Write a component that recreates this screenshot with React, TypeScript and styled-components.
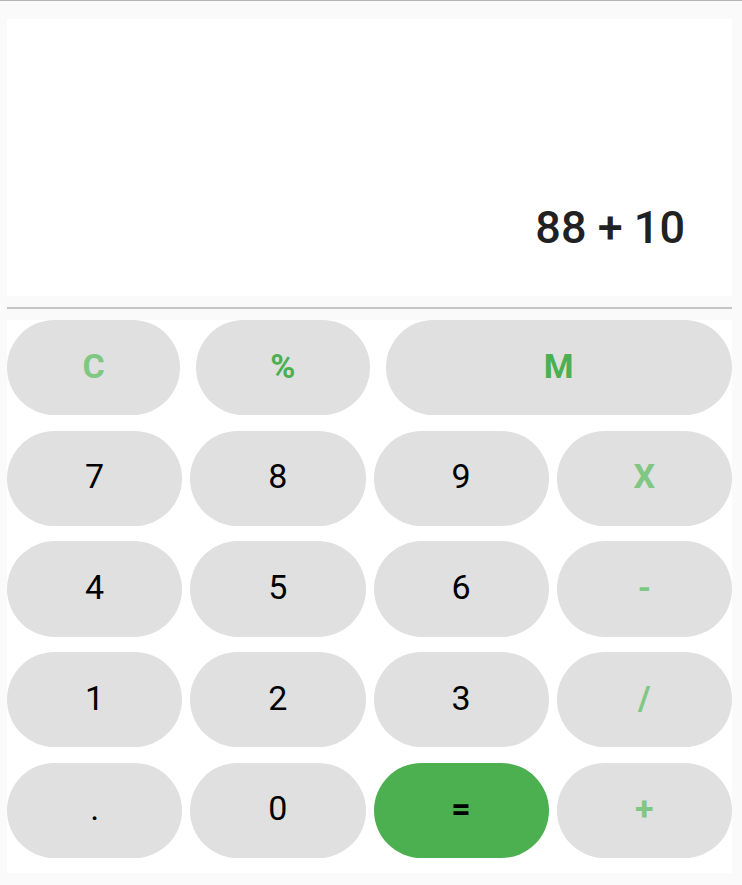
import React from "react";
import styled, { createGlobalStyle } from "styled-components";

const GlobalStyle = createGlobalStyle`
  html, body {
    margin: 0;
    padding: 0;
    background: #fafafa;
    font-family: Roboto, "Liberation Sans", sans-serif;
  }
  * { box-sizing: border-box; }
`;

const Page = styled.div`
  width: 742px;
  height: 885px;
  border-top: 1px solid #b4b4b4;
  padding: 18px 10px 0 7px;
  display: flex;
  flex-direction: column;
  background: #fafafa;
`;

const Display = styled.div`
  height: 277px;
  background: #ffffff;
  display: flex;
  align-items: flex-end;
  justify-content: flex-end;
  padding: 0 47px 46px 0;
`;

const Expression = styled.div`
  font-size: 45px;
  font-weight: 500;
  color: #212121;
  line-height: 1;
`;

const Divider = styled.hr`
  margin: 11px 0 11px;
  border: none;
  height: 2px;
  background: #c6c6c6;
`;

const Keypad = styled.div`
  height: 553px;
  background: #ffffff;
  display: flex;
  flex-direction: column;
  gap: 15.4px;
  padding-bottom: 15px;
`;

const Row = styled.div<{ $gap: number }>`
  flex: 1;
  display: flex;
  gap: ${(p) => p.$gap}px;
`;

type Tone = "digit" | "accent" | "soft" | "equals";

const Key = styled.button<{ $tone: Tone; $span?: number }>`
  flex: ${(p) => p.$span ?? 1};
  min-width: 0;
  border: none;
  border-radius: 48px;
  background: ${(p) => (p.$tone === "equals" ? "#4caf50" : "#e0e0e0")};
  color: ${(p) =>
    p.$tone === "accent" ? "#4caf50" : p.$tone === "soft" ? "#81c784" : "#000000"};
  font-family: Roboto, "Liberation Sans", sans-serif;
  font-size: 34px;
  font-weight: ${(p) => (p.$tone === "digit" ? 400 : 700)};
  display: flex;
  align-items: center;
  justify-content: center;
  padding: 0 0 4px;
  cursor: pointer;
`;

const rows: { label: string; tone: Tone }[][] = [
  [
    { label: "7", tone: "digit" },
    { label: "8", tone: "digit" },
    { label: "9", tone: "digit" },
    { label: "X", tone: "soft" },
  ],
  [
    { label: "4", tone: "digit" },
    { label: "5", tone: "digit" },
    { label: "6", tone: "digit" },
    { label: "-", tone: "soft" },
  ],
  [
    { label: "1", tone: "digit" },
    { label: "2", tone: "digit" },
    { label: "3", tone: "digit" },
    { label: "/", tone: "soft" },
  ],
  [
    { label: ".", tone: "digit" },
    { label: "0", tone: "digit" },
    { label: "=", tone: "equals" },
    { label: "+", tone: "soft" },
  ],
];

export default function App() {
  return (
    <>
      <GlobalStyle />
      <Page>
        <Display>
          <Expression>88 + 10</Expression>
        </Display>
        <Divider />
        <Keypad>
          <Row $gap={16}>
            <Key $tone="soft">C</Key>
            <Key $tone="accent">%</Key>
            <Key $tone="accent" $span={2}>
              M
            </Key>
          </Row>
          {rows.map((r, i) => (
            <Row $gap={8} key={i}>
              {r.map((k) => (
                <Key key={k.label} $tone={k.tone}>
                  {k.label}
                </Key>
              ))}
            </Row>
          ))}
        </Keypad>
      </Page>
    </>
  );
}
